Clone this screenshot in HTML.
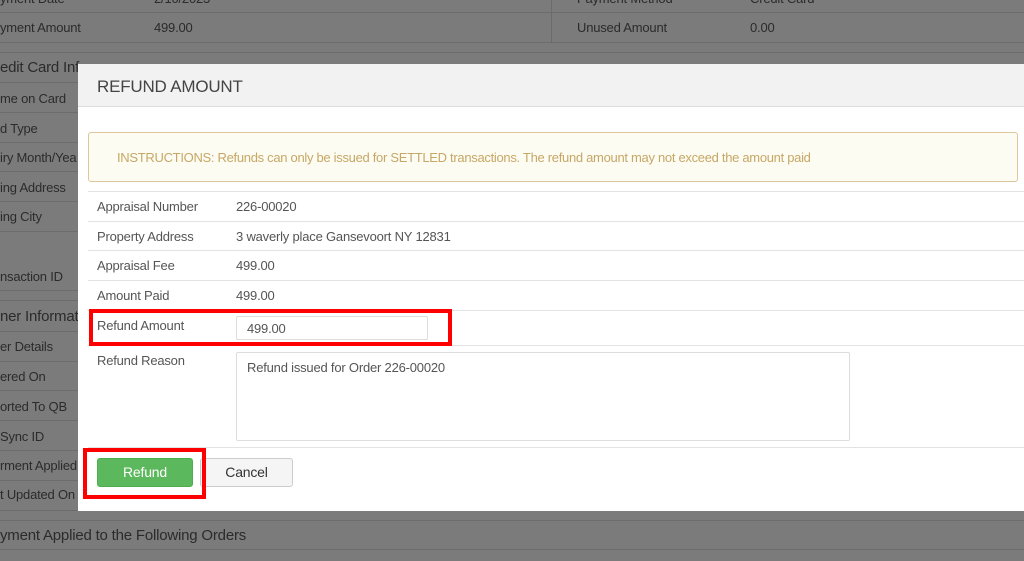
<!DOCTYPE html>
<html><head><meta charset="utf-8"><style>
*{margin:0;padding:0;box-sizing:border-box}
body{width:1024px;height:561px;overflow:hidden;background:#7b7b7b;font-family:"Liberation Sans",sans-serif;font-size:13px;color:#2b2b2b;position:relative;letter-spacing:-0.2px}
.a{position:absolute;white-space:nowrap}
.hl{position:absolute;left:0;height:1px;background:#6c6c6c}
.m{position:absolute;left:78px;top:64px;width:946px;height:447px;background:#fff}
.mh{position:absolute;left:0;top:0;width:100%;height:43px;background:#f2f2f2;border-bottom:1px solid #ddd}
.ml{position:absolute;height:1px;background:#e3e3e3;left:0;right:0}
.lbl{position:absolute;left:19px;color:#555}
.val{position:absolute;left:158px;color:#555}
</style></head><body>
<div class="hl" style="top:12px;width:1024px"></div>
<div class="hl" style="top:42px;width:1024px"></div>
<div class="hl" style="top:52px;width:1024px"></div>
<div style="position:absolute;left:551px;top:0;width:1px;height:42px;background:#6c6c6c"></div>
<div class="a" style="left:0;top:-9px">yment Date</div>
<div class="a" style="left:154px;top:-9px">2/10/2023</div>
<div class="a" style="left:577px;top:-9px">Payment Method</div>
<div class="a" style="left:750px;top:-9px">Credit Card</div>
<div class="a" style="left:0;top:20px">yment Amount</div>
<div class="a" style="left:154px;top:20px">499.00</div>
<div class="a" style="left:577px;top:20px">Unused Amount</div>
<div class="a" style="left:750px;top:20px">0.00</div>
<div class="a" style="left:0;top:59px;font-size:15px">edit Card Info</div>
<div class="a" style="left:0;top:91px">me on Card</div>
<div class="a" style="left:0;top:121px">d Type</div>
<div class="a" style="left:0;top:150px">iry Month/Yea</div>
<div class="a" style="left:0;top:180px">ing Address</div>
<div class="a" style="left:0;top:209px">ing City</div>
<div class="a" style="left:0;top:269px">nsaction ID</div>
<div class="a" style="left:0;top:308px;font-size:15px">ner Informati</div>
<div class="a" style="left:0;top:339px">er Details</div>
<div class="a" style="left:0;top:369px">ered On</div>
<div class="a" style="left:0;top:399px">orted To QB</div>
<div class="a" style="left:0;top:429px">Sync ID</div>
<div class="a" style="left:0;top:458px">rment Applied</div>
<div class="a" style="left:0;top:487px">t Updated On</div>
<div class="hl" style="top:82px;width:78px"></div>
<div class="hl" style="top:112px;width:78px"></div>
<div class="hl" style="top:142px;width:78px"></div>
<div class="hl" style="top:171px;width:78px"></div>
<div class="hl" style="top:201px;width:78px"></div>
<div class="hl" style="top:231px;width:78px"></div>
<div class="hl" style="top:290px;width:78px"></div>
<div class="hl" style="top:300px;width:78px"></div>
<div class="hl" style="top:331px;width:78px"></div>
<div class="hl" style="top:361px;width:78px"></div>
<div class="hl" style="top:390px;width:78px"></div>
<div class="hl" style="top:420px;width:78px"></div>
<div class="hl" style="top:450px;width:78px"></div>
<div class="hl" style="top:480px;width:78px"></div>
<div class="hl" style="top:510px;width:78px"></div>
<div class="hl" style="top:520px;width:1024px"></div>
<div class="hl" style="top:549px;width:1024px"></div>
<div class="a" style="left:0;top:527px;font-size:15px">yment Applied to the Following Orders</div>

<div class="m">
 <div class="mh"><div class="a" style="left:19px;top:13px;font-size:17px;color:#444">REFUND AMOUNT</div></div>
 <div style="position:absolute;left:10px;top:68px;width:930px;height:50px;background:#fcfcf2;border:1px solid #dcc69a;border-radius:3px"></div>
 <div class="a" style="left:39px;top:86px;color:#c7a766;letter-spacing:-0.3px">INSTRUCTIONS: Refunds can only be issued for SETTLED transactions. The refund amount may not exceed the amount paid</div>
 <div class="ml" style="top:127px;left:10px"></div>
 <div class="lbl" style="top:135px">Appraisal Number</div><div class="val" style="top:135px">226-00020</div>
 <div class="ml" style="top:157px;left:10px"></div>
 <div class="lbl" style="top:165px">Property Address</div><div class="val" style="top:165px">3 waverly place Gansevoort NY 12831</div>
 <div class="ml" style="top:186px;left:10px"></div>
 <div class="lbl" style="top:194px">Appraisal Fee</div><div class="val" style="top:194px">499.00</div>
 <div class="ml" style="top:216px;left:10px"></div>
 <div class="lbl" style="top:224px">Amount Paid</div><div class="val" style="top:224px">499.00</div>
 <div class="ml" style="top:246px;left:10px"></div>
 <div class="lbl" style="top:254px">Refund Amount</div>
 <div style="position:absolute;left:158px;top:252px;width:192px;height:24px;border:1px solid #ddd;border-radius:2px"></div>
 <div class="val" style="left:169px;top:257px">499.00</div>
 <div class="ml" style="top:281px;left:10px"></div>
 <div class="lbl" style="top:289px">Refund Reason</div>
 <div style="position:absolute;left:158px;top:288px;width:614px;height:89px;border:1px solid #ddd;border-radius:2px"></div>
 <div class="val" style="left:169px;top:296px">Refund issued for Order 226-00020</div>
 <div class="ml" style="top:383px;left:10px"></div>
 <div style="position:absolute;left:19px;top:394px;width:96px;height:29px;background:#5cb85c;border:1px solid #4cae4c;border-radius:3px;color:#fff;text-align:center;line-height:27px;font-size:14px">Refund</div>
 <div style="position:absolute;left:122px;top:394px;width:93px;height:29px;background:#f5f5f5;border:1px solid #ccc;border-radius:3px;color:#333;text-align:center;line-height:27px;font-size:14px">Cancel</div>
</div>
<div style="position:absolute;left:89px;top:309px;width:363px;height:37px;border:4px solid #f00"></div>
<div style="position:absolute;left:83px;top:448px;width:123px;height:51px;border:4px solid #f00"></div>
</body></html>
